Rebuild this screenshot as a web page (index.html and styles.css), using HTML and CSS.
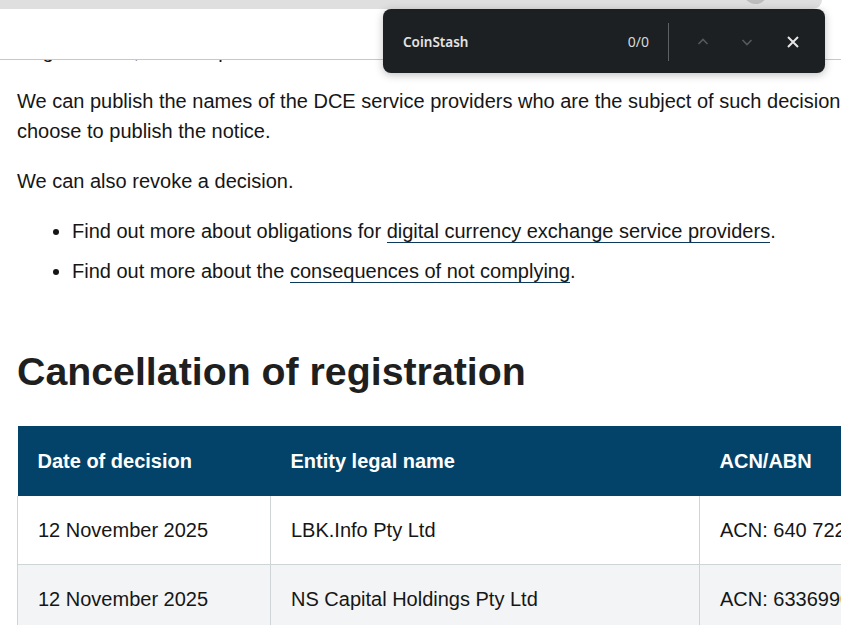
FILE: index.html
```html
<!DOCTYPE html>
<html lang="en">
<head>
    <meta charset="UTF-8">
    <meta name="viewport" content="width=device-width, initial-scale=1.0">
    <title>Registration decisions</title>
    <link rel="stylesheet" href="styles.css">
</head>
<body>
    <div class="browser-strip">
        <span class="strip-dot"></span>
    </div>

    <div class="viewport">
        <header class="site-header"></header>

        <!-- Chrome find-in-page bar -->
        <div class="find-bar">
            <span class="find-query">CoinStash</span>
            <span class="find-count">0/0</span>
            <span class="find-divider"></span>
            <button class="find-btn dim" aria-label="Previous">
                <svg width="16" height="16" viewBox="0 0 16 16"><polyline points="3.5,10 8,5.5 12.5,10" fill="none" stroke="currentColor" stroke-width="1.6"/></svg>
            </button>
            <button class="find-btn dim" aria-label="Next">
                <svg width="16" height="16" viewBox="0 0 16 16"><polyline points="3.5,6 8,10.5 12.5,6" fill="none" stroke="currentColor" stroke-width="1.6"/></svg>
            </button>
            <button class="find-btn close" aria-label="Close">
                <svg width="16" height="16" viewBox="0 0 16 16"><path d="M3 3 L13 13 M13 3 L3 13" fill="none" stroke="currentColor" stroke-width="2"/></svg>
            </button>
        </div>

        <main class="content">
            <p>Registrations, we also publish the outcome of these decisions on this page.</p>

            <p>We can publish the names of the DCE service providers who are the subject of such decisions if we choose to publish the notice.</p>

            <p>We can also revoke a decision.</p>

            <ul class="links">
                <li>Find out more about obligations for <a href="#">digital currency exchange service providers</a>.</li>
                <li>Find out more about the <a href="#">consequences of not complying</a>.</li>
            </ul>

            <h2>Cancellation of registration</h2>

            <table class="decisions">
                <colgroup>
                    <col class="col-date">
                    <col class="col-name">
                    <col>
                </colgroup>
                <thead>
                    <tr>
                        <th>Date of decision</th>
                        <th>Entity legal name</th>
                        <th>ACN/ABN</th>
                    </tr>
                </thead>
                <tbody>
                    <tr>
                        <td>12 November 2025</td>
                        <td>LBK.Info Pty Ltd</td>
                        <td>ACN: 640 722 154</td>
                    </tr>
                    <tr>
                        <td>12 November 2025</td>
                        <td>NS Capital Holdings Pty Ltd</td>
                        <td>ACN: 633699081</td>
                    </tr>
                </tbody>
            </table>
        </main>
    </div>
</body>
</html>
```

FILE: styles.css
```css
/* Basic reset for body */
body {
    font-family: "Liberation Sans", Arial, sans-serif;
    color: #161616;
    background-color: #ffffff;
    margin: 0;
    padding: 0;
    overflow: hidden;
}

/* Grey strip at the very top of the window */
.browser-strip {
    position: relative;
    height: 9px;
    width: 822px;
    background-color: #dfdfdf;
    border-bottom-right-radius: 10px;
    overflow: hidden;
}

.strip-dot {
    position: absolute;
    left: 743px;
    top: -21px;
    width: 25px;
    height: 25px;
    border-radius: 50%;
    background-color: #bdbdbd;
}

.viewport {
    position: relative;
}

/* Sticky site header covering the scrolled text */
.site-header {
    position: absolute;
    top: 0;
    left: 0;
    right: 0;
    height: 50px;
    background-color: #ffffff;
    border-bottom: 1px solid #c8c8c8;
    z-index: 2;
}

/* Find bar */
.find-bar {
    position: absolute;
    top: 0;
    left: 383px;
    width: 442px;
    height: 64px;
    box-sizing: border-box;
    padding: 1px 16px 0 20px;
    display: flex;
    align-items: center;
    background-color: #1c2022;
    border-radius: 8px;
    box-shadow: 0 2px 8px rgba(0, 0, 0, 0.25);
    font-family: "Noto Sans", "Open Sans", sans-serif;
    font-size: 13.5px;
    color: #e3e3e3;
    z-index: 3;
}

.find-query {
    flex: 1;
    font-weight: 600;
}

.find-count {
    font-size: 14px;
    color: #d8d8d8;
}

.find-divider {
    width: 1px;
    height: 38px;
    margin: 0 18px 0 19px;
    background-color: #5d6163;
}

.find-btn {
    width: 32px;
    height: 32px;
    margin-left: 12px;
    padding: 0;
    border: none;
    background: none;
    color: #e6e6e6;
    display: flex;
    align-items: center;
    justify-content: center;
}

.find-btn:first-of-type {
    margin-left: 0;
}

.find-btn.close {
    margin-left: 14px;
}

.find-btn.dim {
    color: #55595b;
}

/* Page content */
.content {
    width: 900px;
    padding: 27px 0 0 17px;
    font-size: 20px;
    line-height: 30px;
}

p {
    margin: 0 0 20px;
}

.links {
    margin: 0;
    padding-left: 55px;
}

.links li + li {
    margin-top: 10px;
}

a {
    color: #161616;
    text-decoration: none;
    border-bottom: 1px solid #0b3a5a;
}

h2 {
    font-size: 39.3px;
    line-height: 1.2;
    color: #1f1f1f;
    margin: 62px 0 31px;
}

/* Decisions table */
.decisions {
    width: 900px;
    table-layout: fixed;
    border-collapse: collapse;
    font-size: 20px;
    line-height: 30px;
}

.col-date {
    width: 253px;
}

.col-name {
    width: 429px;
}

.decisions th {
    padding: 20px 20px;
    text-align: left;
    font-weight: bold;
    color: #ffffff;
    background-color: #03436a;
}

.decisions td {
    padding: 19px 20px 19px 20px;
    border: 1px solid #cfd4d7;
    border-top: none;
}

.decisions tbody tr:nth-child(even) td {
    background-color: #f2f4f5;
}
```
